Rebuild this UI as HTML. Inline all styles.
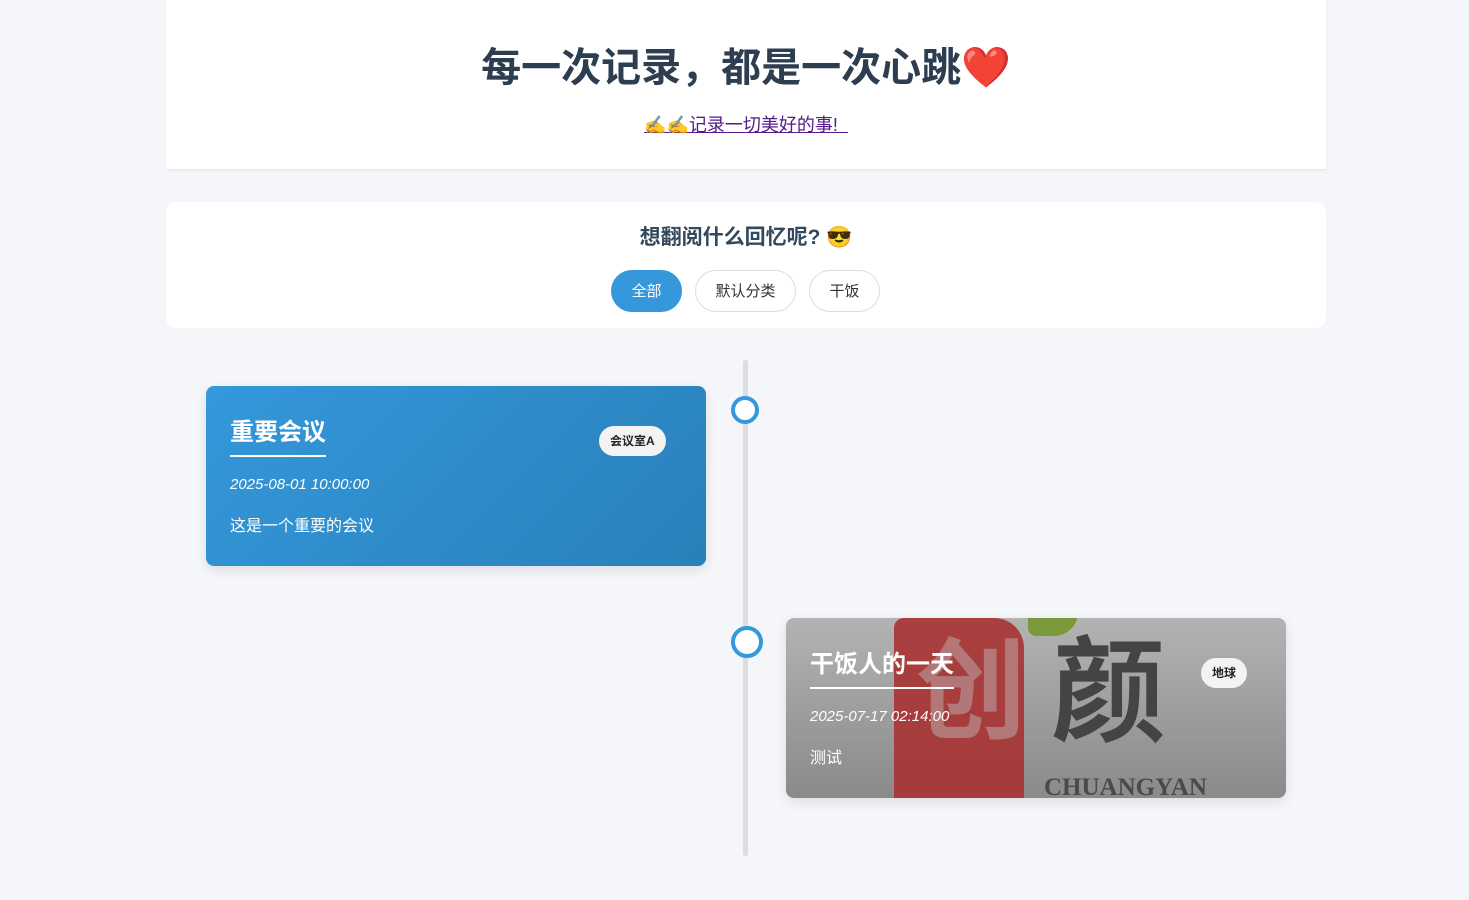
<!DOCTYPE html>
<html><head><meta charset="utf-8"><style>
*{margin:0;padding:0;box-sizing:border-box}
body{width:1469px;height:900px;background:#f5f6fa;font-family:"Liberation Sans","Noto Sans CJK SC",sans-serif;position:relative;overflow:hidden}
.hdr{position:absolute;left:166px;top:0;width:1160px;height:169px;background:#fff;box-shadow:0 1px 3px rgba(0,0,0,.08);text-align:center}
.hdr h1{position:absolute;top:35px;width:100%;font-size:40px;font-weight:bold;color:#2c3e50}
.hdr a{position:absolute;top:111px;left:0;right:0;margin:auto;width:fit-content;font-size:18px;color:#551a8b;text-decoration:underline;white-space:pre}
.flt{position:absolute;left:166px;top:202px;width:1160px;height:126px;background:#fff;border-radius:10px;text-align:center}
.ttl{position:absolute;top:19px;width:100%;font-size:21px;font-weight:bold;color:#34495e}
.btn{position:absolute;top:68px;height:42px;border-radius:21px;border:1px solid #ddd;background:#fff;font-size:15px;line-height:42px;color:#333;text-align:center}
.line{position:absolute;left:743px;top:360px;width:5px;height:496px;background:#ddd;border-radius:3px}
.dot{position:absolute;width:28px;height:28px;border:4px solid #3498db;border-radius:50%;background:#fff}
.card{position:absolute;width:500px;height:180px;border-radius:8px;overflow:hidden;color:#fff;box-shadow:0 4px 12px rgba(0,0,0,.1)}
.card h3{position:absolute;left:24px;top:26px;font-size:24px;font-weight:bold;padding-bottom:8px;border-bottom:2px solid #fff}
.date{position:absolute;left:24px;top:90px;font-size:15px;font-style:italic}
.desc{position:absolute;left:24px;top:126px;font-size:16px}
.tag{position:absolute;top:40px;height:30px;border-radius:15px;background:#f3f3f3;color:#222;font-size:12px;font-weight:bold;line-height:30px;padding:0 11px}
</style></head><body>
<div class="hdr"><h1>每一次记录，都是一次心跳<span style="color:#e22">❤️</span></h1><a>✍️✍️记录一切美好的事!  </a></div>
<div class="flt"><div class="ttl">想翻阅什么回忆呢? 😎</div>
<div class="btn" style="left:445px;width:71px;background:#3498db;border-color:#3498db;color:#fff">全部</div>
<div class="btn" style="left:529px;width:101px">默认分类</div>
<div class="btn" style="left:643px;width:71px">干饭</div></div>
<div class="line"></div>
<div class="dot" style="left:731px;top:396px"></div>
<div class="dot" style="left:731px;top:626px;width:32px;height:32px"></div>
<div class="card" style="left:206px;top:386px;background:linear-gradient(135deg,#3498db,#2980b9)">
<h3>重要会议</h3><div class="date">2025-08-01 10:00:00</div><div class="desc">这是一个重要的会议</div><div class="tag" style="left:393px">会议室A</div></div>
<div class="card" style="left:786px;top:618px;background:linear-gradient(#b3b3b3,#8a8a8a)">
<div style="position:absolute;left:108px;top:0;width:130px;height:180px;background:#a83232;border-radius:10px 30px 0 0;opacity:.9"></div>
<div style="position:absolute;left:130px;top:20px;font-size:110px;color:#b89090;font-weight:bold;line-height:1;opacity:.7">创</div>
<div style="position:absolute;left:242px;top:-6px;width:50px;height:24px;background:#7a9a3a;border-radius:0 0 30px 10px"></div>
<div style="position:absolute;left:265px;top:18px;font-size:115px;color:#444;font-weight:bold;line-height:1">颜</div>
<div style="position:absolute;left:258px;top:156px;font-family:'Liberation Serif',serif;font-weight:bold;font-size:25px;color:#4a4a4a">CHUANGYAN</div>
<h3>干饭人的一天</h3><div class="date">2025-07-17 02:14:00</div><div class="desc">测试</div><div class="tag" style="left:415px">地球</div></div>
</body></html>
